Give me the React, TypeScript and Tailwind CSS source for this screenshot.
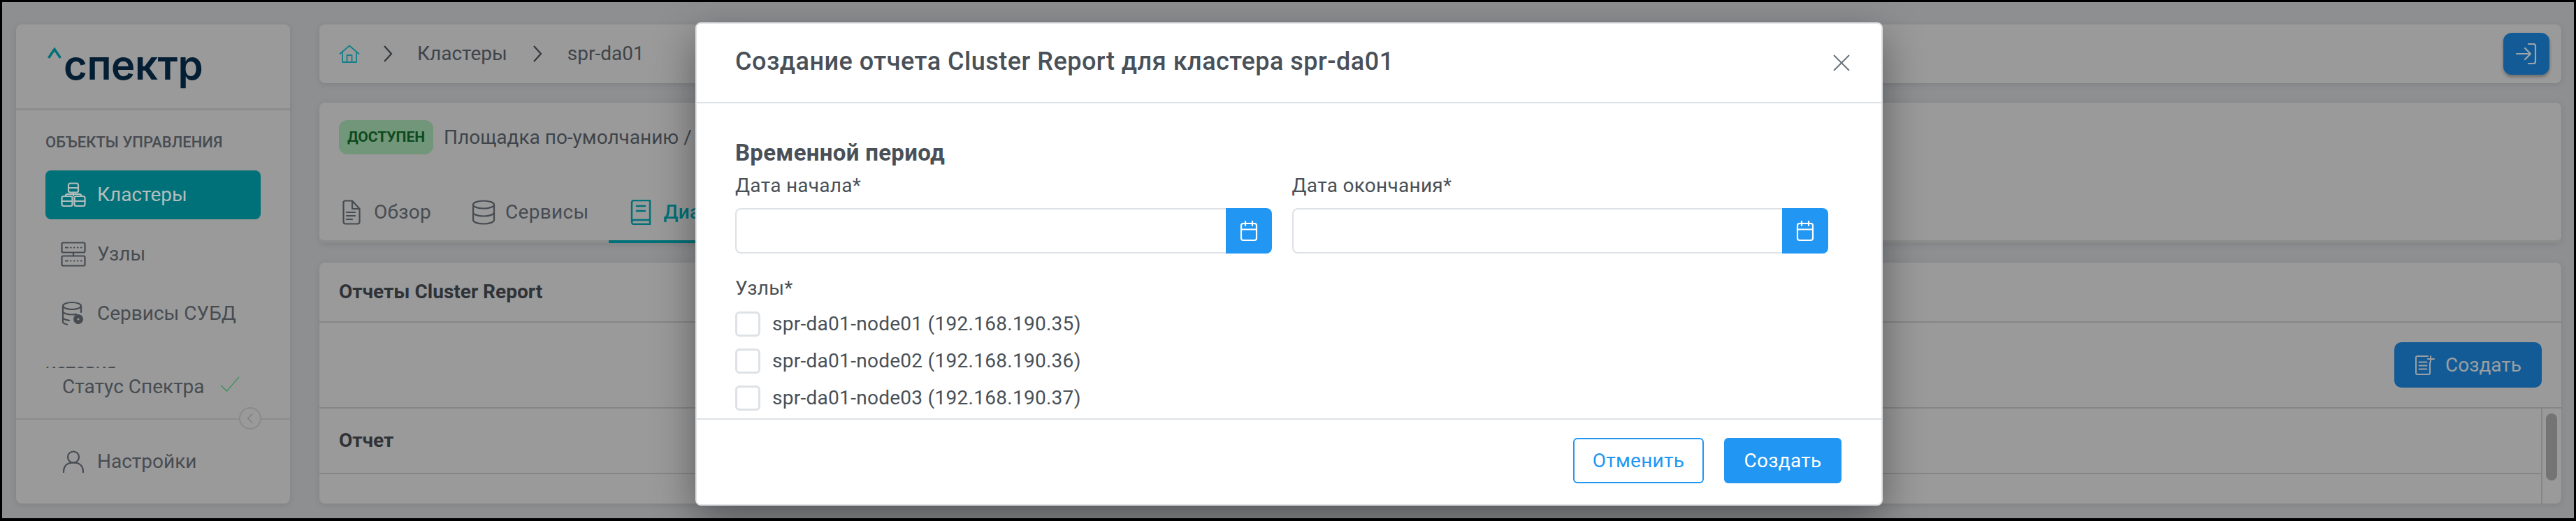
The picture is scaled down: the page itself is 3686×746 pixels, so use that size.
import React from "react";

const Ic = ({ className, children, vb = "0 0 24 24", sw = 1.6 }: { className: string; children: React.ReactNode; vb?: string; sw?: number }) => (
  <svg viewBox={vb} fill="none" stroke="currentColor" strokeWidth={sw} strokeLinecap="round" strokeLinejoin="round" className={className}>
    {children}
  </svg>
);

const ClusterIcon = () => (
  <Ic className="w-[36px] h-[36px] shrink-0" vb="0 0 36 36" sw={2.2}>
    <rect x="11" y="1.5" width="14" height="13" rx="2.5" />
    <path d="M11 8h14M18 14.5v5M7 20v-1a2 2 0 0 1 2-2h18a2 2 0 0 1 2 2v1" />
    <rect x="1.5" y="20" width="15" height="14" rx="2.5" />
    <path d="M1.5 27h15" />
    <rect x="19.5" y="20" width="15" height="14" rx="2.5" />
    <path d="M19.5 27h15" />
  </Ic>
);
const NodesIcon = () => (
  <Ic className="w-[36px] h-[36px] shrink-0" vb="0 0 36 36" sw={2.2}>
    <rect x="1.5" y="1.5" width="33" height="14" rx="2" />
    <path d="M7 8.5h3M14 8.5h.5M19 8.5h.5M24 8.5h.5M29 8.5h.5M18 15.5v5" />
    <rect x="1.5" y="20.5" width="33" height="14" rx="2" />
    <path d="M7 27.5h3M14 27.5h.5M19 27.5h.5M24 27.5h.5M29 27.5h.5" />
  </Ic>
);
const DbGearIcon = () => (
  <Ic className="w-[36px] h-[36px] shrink-0" vb="0 0 36 36" sw={2.2}>
    <ellipse cx="16" cy="7" rx="13" ry="5" />
    <path d="M3 7v23c0 1.500 2 2.800 6 3.500M29 7v9M3 14.500c0 2.500 5 5 13 5 2 0 4-.2 6-.6M3 23c0 2.200 3.500 4 9 4.800" />
    <circle cx="25" cy="26" r="5" fill="currentColor" strokeWidth="4" strokeDasharray="2.500 1.500" />
    <circle cx="25" cy="26" r="1.500" fill="#9a9a9a" stroke="none" />
  </Ic>
);

const NavItem = ({ active, icon, label }: { active?: boolean; icon: React.ReactNode; label: string }) => (
  <div className={`h-[70px] rounded-[8px] flex items-center gap-[16px] pl-[22px] shrink-0 ${active ? "bg-[#007178] text-[#b3bdbe]" : "text-[#474c52]"}`}>
    {icon}
    <span className="text-[28px]">{label}</span>
  </div>
);

const CalIcon = () => (
  <Ic className="w-[26px] h-[30px]" vb="0 0 26 30" sw={2.2}>
    <rect x="2" y="4" width="22" height="24" rx="3" />
    <path d="M2 12.500h22M8 1v6M18 1v6" />
  </Ic>
);

const DateField = ({ label }: { label: string }) => (
  <div className="flex-1">
    <div className="text-[28px] leading-[42px] text-[#495057] h-[53px]">{label}</div>
    <div className="flex h-[65px]">
      <div className="flex-1 border-2 border-r-0 border-[#dee2e6] rounded-l-[8px] bg-white" />
      <div className="w-[66px] bg-[#2196f3] rounded-r-[8px] flex items-center justify-center text-white">
        <CalIcon />
      </div>
    </div>
  </div>
);

const Node = ({ label }: { label: string }) => (
  <div className="flex items-center gap-[17px] h-[36px]">
    <div className="w-[36px] h-[36px] rounded-[6px] border-[3px] border-[#dee2e6] bg-white shrink-0" />
    <span className="text-[28px] text-[#495057] whitespace-nowrap">{label}</span>
  </div>
);

const Tab = ({ icon, label, active, gap }: { icon: React.ReactNode; label: string; active?: boolean; gap: string }) => (
  <div className={`flex items-center ${gap} h-[84px] -mb-[4px] border-b-[4px] tracking-[0.28px] ${active ? "pl-[31px] pr-[29px] border-[#007178] text-[#007178] font-medium" : "px-[29px] border-transparent text-[#474c52]"}`}>
    {icon}
    <span className="text-[28px] whitespace-nowrap">{label}</span>
  </div>
);

export default function App() {
  return (
    <div className="w-[3686px] h-[746px] bg-black pt-[3px] pl-[3px] pr-[3px] pb-[4px] overflow-hidden" style={{ fontFamily: "Roboto, 'Noto Sans', sans-serif" }}>
      <div className="relative w-full h-full bg-[#8e8f91] flex gap-[42px] pl-[20px] pr-[18px] pt-[32px] pb-[21px] overflow-hidden">
        {/* Sidebar */}
        <aside className="w-[392px] shrink-0 bg-[#9a9a9a] rounded-[8px] shadow-[0_2px_8px_rgba(0,0,0,0.1)] flex flex-col">
          <div className="h-[123px] border-b-[3px] border-[#8c8c8c] pl-[45px] pb-[4px] flex items-center shrink-0">
            <div className="flex items-start leading-none text-[#041e33] font-semibold" style={{ fontFamily: "Inter, Roboto, sans-serif" }}>
              <svg viewBox="0 0 20 16" className="w-[20px] h-[16px] mt-[4px]" fill="none" stroke="#007178" strokeWidth="3.500"><path d="M1.500 15L10 2.500 18.500 15" /></svg>
              <span className="text-[58px] tracking-[-0.4px] ml-[3px]">спектр</span>
            </div>
          </div>
          <div className="h-[369px] overflow-hidden px-[42px] shrink-0 flex flex-col">
            <div className="text-[22px] font-medium text-[#474c52] pt-[32px] leading-[28px] h-[86px] shrink-0">ОБЪЕКТЫ УПРАВЛЕНИЯ</div>
            <div className="flex flex-col gap-[15px] shrink-0">
              <NavItem active icon={<ClusterIcon />} label="Кластеры" />
              <NavItem icon={<NodesIcon />} label="Узлы" />
              <NavItem icon={<DbGearIcon />} label="Сервисы СУБД" />
            </div>
            <div className="text-[22px] font-medium text-[#474c52] mt-[36px] leading-[28px] shrink-0">ИСТОРИЯ</div>
          </div>
          <div className="h-[74px] border-b-2 border-[#8c8c8c] relative flex items-center pl-[66px] pb-[18px] gap-[21px] text-[#474c52] shrink-0">
            <span className="text-[28px]">Статус Спектра</span>
            <svg viewBox="0 0 30 24" className="w-[30px] h-[22px] -mt-[8px]" fill="none" stroke="#3d8f5a" strokeWidth="1.500"><path d="M1 14l9 9L29 1" /></svg>
            <div className="absolute right-[41px] -bottom-[16px] w-[32px] h-[32px] rounded-full border-2 border-[#8a8a8a] bg-[#9a9a9a] flex items-center justify-center">
              <svg viewBox="0 0 12 20" className="w-[10px] h-[18px]" fill="none" stroke="#808080" strokeWidth="1.800"><path d="M10 2L2 10l8 8" /></svg>
            </div>
          </div>
          <div className="flex-1 flex items-center pl-[66px] gap-[18px] text-[#474c52]">
            <Ic className="w-[32px] h-[32px]" vb="0 0 32 32" sw={2.200}>
              <circle cx="16" cy="9.500" r="8" />
              <path d="M2 31c0-9 5-13.500 14-13.500S30 22 30 31" />
            </Ic>
            <span className="text-[28px]">Настройки</span>
          </div>
        </aside>

        {/* Main */}
        <main className="flex-1 min-w-0 flex flex-col gap-[28px]">
          <header className="h-[84px] bg-[#9a9a9a] rounded-[8px] shadow-[0_2px_8px_rgba(0,0,0,0.1)] flex items-center pl-[28px] pr-[17px] shrink-0">
            <Ic className="w-[30px] h-[26px] text-[#12808a]" vb="0 0 30 26" sw={1.800}>
              <path d="M1.500 13L15 1.500 28.500 13M5 10.500V25h20V10.500M11.500 25V15h7v10" />
            </Ic>
            <svg viewBox="0 0 14 24" className="w-[14px] h-[24px] ml-[33px]" fill="none" stroke="#33383d" strokeWidth="2.200"><path d="M2 1l10 11L2 23" /></svg>
            <span className="text-[28px] text-[#3f444a] ml-[35px]">Кластеры</span>
            <svg viewBox="0 0 14 24" className="w-[14px] h-[24px] ml-[36px]" fill="none" stroke="#33383d" strokeWidth="2.200"><path d="M2 1l10 11L2 23" /></svg>
            <span className="text-[28px] text-[#3f444a] ml-[36px]">spr-da01</span>
            <div className="ml-auto w-[66px] h-[60px] rounded-[12px] bg-[#135b96] shadow-[0_3px_4px_rgba(0,0,0,0.3)] flex items-center justify-center">
              <svg viewBox="0 0 30 30" className="w-[30px] h-[30px]" fill="none" stroke="#a0a5a9" strokeWidth="2.200" strokeLinecap="round" strokeLinejoin="round"><path d="M1 15h20M13 7l8 8-8 8M18 1h7a3 3 0 0 1 3 3v22a3 3 0 0 1-3 3h-7" /></svg>
            </div>
          </header>

          <section className="h-[201px] bg-[#9a9a9a] rounded-[8px] shadow-[0_2px_8px_rgba(0,0,0,0.1)] flex flex-col shrink-0">
            <div className="flex items-center h-[117px] pl-[28px] pb-[18px] shrink-0">
              <span className="h-[49px] w-[135px] rounded-[12px] bg-[#72967a] text-[#0d4a1e] text-[21px] font-bold flex items-center justify-center">ДОСТУПЕН</span>
              <span className="text-[28px] text-[#3f444a] ml-[15px]">Площадка по-умолчанию / spr-da01</span>
            </div>
            <div className="flex-1 border-b-[4px] border-[#8c8c8c] rounded-b-[8px] flex items-end pl-[4px]">
              <Tab
                label="Обзор"
                gap="gap-[19px]"
                icon={
                  <Ic className="w-[26px] h-[36px]" vb="0 0 26 36" sw={2.200}>
                    <path d="M3 1.500h11L24.500 13v19a3 3 0 0 1-3 2.500H4.500a3 3 0 0 1-3-3V3zM14 1.500V13h10.500M6 18h12M6 23h12M6 28h8" />
                  </Ic>
                }
              />
              <Tab
                label="Сервисы"
                gap="gap-[14px]"
                icon={
                  <Ic className="w-[34px] h-[36px]" vb="0 0 34 36" sw={2.200}>
                    <ellipse cx="17" cy="7" rx="15" ry="5.500" />
                    <path d="M2 7v22c0 3 6.500 5.500 15 5.500S32 32 32 29V7M2 18c0 3 6.500 5.500 15 5.500S32 21 32 18" />
                  </Ic>
                }
              />
              <Tab
                active
                label="Диагностика"
                gap="gap-[17px]"
                icon={
                  <Ic className="w-[30px] h-[36px]" vb="0 0 30 36" sw={2.400}>
                    <path d="M2 30V4a3 3 0 0 1 3-3h23v34H5a3 3 0 0 1-3-3 3 3 0 0 1 3-3h23M9 9h12M9 16h12" />
                  </Ic>
                }
              />
            </div>
          </section>

          <section className="flex-1 min-h-0 bg-[#9a9a9a] rounded-[8px] shadow-[0_2px_8px_rgba(0,0,0,0.1)] flex flex-col overflow-hidden">
            <div className="h-[86px] border-b-2 border-[#868686] flex items-center pl-[28px] text-[28px] font-bold text-[#2f3338] shrink-0">Отчеты Cluster Report</div>
            <div className="h-[123px] border-b-2 border-[#868686] flex items-center justify-end pr-[28px] shrink-0">
              <div className="w-[211px] h-[65px] rounded-[10px] bg-[#135b96] flex items-center pl-[30px] gap-[15px] text-[#9b9fa2]">
                <Ic className="w-[28px] h-[28px]" vb="0 0 28 28" sw={2}>
                  <path d="M21 10v15a2 2 0 0 1-2 2H3a2 2 0 0 1-2-2V3a2 2 0 0 1 2-2h15M5.500 9.500h11M5.500 14.500h11M5.500 19.500h11M22 1v8M18 5h9" />
                </Ic>
                <span className="text-[28px]">Создать</span>
              </div>
            </div>
            <div className="flex-1 min-h-0 flex mr-[2px]">
              <div className="flex-1">
                <div className="h-[94px] border-b-2 border-[#868686] flex items-center pl-[28px] text-[28px] font-bold text-[#2f3338]">Отчет</div>
              </div>
              <div className="w-[27px] border-l-2 border-[#868686] pl-[5px] pt-[7px]">
                <div className="w-[16px] h-[96px] rounded-full bg-[#747474]" />
              </div>
            </div>
          </section>
        </main>

        {/* Modal */}
        <div className="absolute left-[992px] top-[29px] w-[1699px] h-[692px] bg-white rounded-[8px] border-2 border-[#dfe2e5] shadow-[0_20px_60px_rgba(0,0,0,0.4)] flex flex-col overflow-hidden tracking-[0.28px]">
          <div className="h-[114px] border-b-2 border-[#dee2e6] flex items-center justify-between pl-[55px] pr-[45px] shrink-0">
            <span className="text-[36px] font-medium text-[#495057] tracking-[0.5px] -mt-[4px]">Создание отчета Cluster Report для кластера spr-da01</span>
            <svg viewBox="0 0 24 24" className="w-[24px] h-[24px]" fill="none" stroke="#6c757d" strokeWidth="2"><path d="M1 1l22 22M23 1L1 23" /></svg>
          </div>
          <div className="flex-1 min-h-0 overflow-hidden pl-[55px] pr-[76px] pt-[49px]">
            <div className="text-[33px] font-bold text-[#495057] tracking-[0.3px] leading-[44px] h-[43px]">Временной период</div>
            <div className="flex gap-[29px] mt-[5px]">
              <DateField label="Дата начала*" />
              <DateField label="Дата окончания*" />
            </div>
            <div className="text-[28px] text-[#495057] mt-[32px] h-[51px] leading-[36px]">Узлы*</div>
            <div className="flex flex-col gap-[17px]">
              <Node label="spr-da01-node01 (192.168.190.35)" />
              <Node label="spr-da01-node02 (192.168.190.36)" />
              <Node label="spr-da01-node03 (192.168.190.37)" />
            </div>
          </div>
          <div className="h-[123px] border-t-2 border-[#dee2e6] flex items-center justify-end pr-[57px] gap-[29px] pb-[4px] shrink-0">
            <button className="w-[187px] h-[65px] rounded-[6px] border-2 border-[#2196f3] text-[#2196f3] text-[28px] bg-white">Отменить</button>
            <button className="w-[168px] h-[65px] rounded-[6px] bg-[#2196f3] text-white text-[28px]">Создать</button>
          </div>
        </div>
      </div>
    </div>
  );
}
